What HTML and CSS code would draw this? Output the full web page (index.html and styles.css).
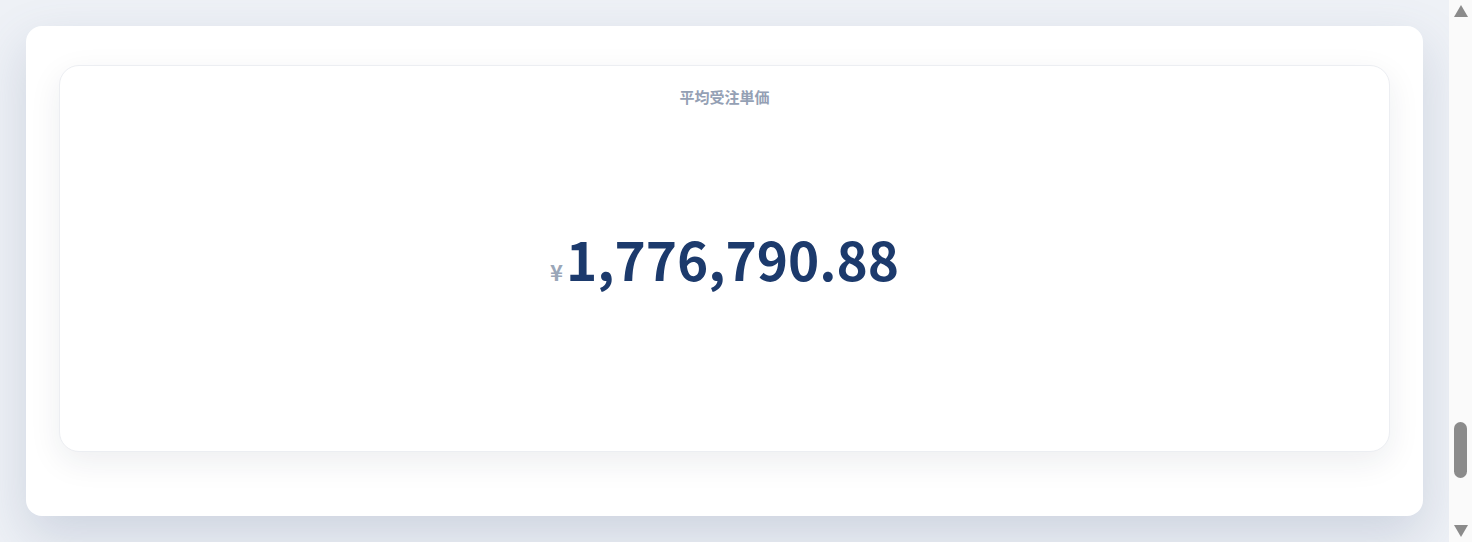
FILE: index.html
```html
<!DOCTYPE html>
<html lang="ja">
<head>
  <meta charset="UTF-8">
  <title>受注ダッシュボード</title>
  <link rel="stylesheet" href="styles.css">
</head>
<body>
  <main class="page">
    <section class="section">
      <div class="kpi-card">
        <div class="kpi-label">平均受注単価</div>
        <div class="kpi-body">
          <span class="kpi-unit">¥</span>
          <span class="kpi-value">1,776,790.88</span>
        </div>
      </div>
    </section>
  </main>

  <!-- スクロールバー -->
  <div class="scrollbar">
    <svg class="scroll-arrow" width="14" height="12" viewBox="0 0 14 12"><path d="M7 0L14 12H0z" fill="#8b8b8b"/></svg>
    <div class="scroll-track"><div class="scroll-thumb"></div></div>
    <svg class="scroll-arrow" width="14" height="12" viewBox="0 0 14 12"><path d="M0 0H14L7 12z" fill="#8b8b8b"/></svg>
  </div>
</body>
</html>
```
FILE: styles.css
```css
body {
  margin: 0;
  height: 100vh;
  overflow: hidden;
  display: flex;
  font-family: "Noto Sans CJK JP", "Noto Sans", sans-serif;
  background: #eef1f6;
}
.page {
  flex: 1;
  padding: 26px;
}
.section {
  height: 490px;
  box-sizing: border-box;
  padding: 39px 33px 64px 33px;
  background: #fff;
  border-radius: 16px;
  box-shadow: 0 20px 50px rgba(90, 110, 145, 0.22);
}
.kpi-card {
  height: 100%;
  box-sizing: border-box;
  display: flex;
  flex-direction: column;
  border: 1px solid #eceef2;
  border-radius: 20px;
  background: #fff;
  box-shadow: 0 10px 32px rgba(30, 41, 59, 0.08);
  padding-top: 22px;
}
.kpi-label {
  text-align: center;
  font-size: 15px;
  font-weight: 700;
  line-height: 18px;
  color: #94a0b4;
}
.kpi-body {
  flex: 1;
  display: flex;
  justify-content: center;
  align-items: baseline;
  padding-top: 126px;
}
.kpi-unit {
  font-size: 22px;
  font-weight: 700;
  color: #9aa6b8;
  margin-right: 3px;
}
.kpi-value {
  font-size: 53px;
  font-weight: 700;
  line-height: 1;
  color: #1c3a6c;
}

.scrollbar {
  width: 23px;
  flex-shrink: 0;
  display: flex;
  flex-direction: column;
  align-items: center;
  background: #fafafa;
}
.scroll-arrow {
  display: block;
  margin: 5px 0;
}
.scroll-track {
  flex: 1;
  width: 100%;
  display: flex;
  justify-content: center;
}
.scroll-thumb {
  width: 13px;
  height: 56px;
  margin-top: 400px;
  border-radius: 7px;
  background: #8b8b8b;
}
```
